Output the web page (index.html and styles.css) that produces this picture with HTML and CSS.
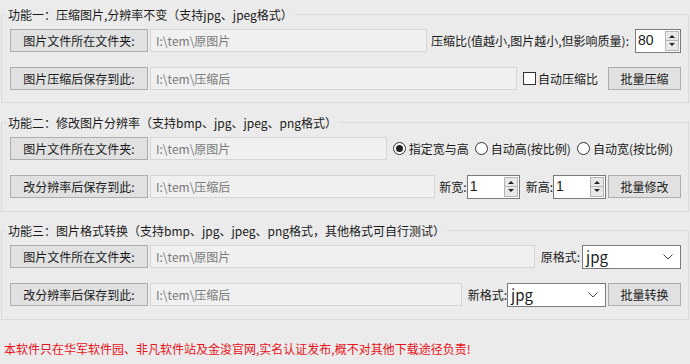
FILE: index.html
```html
<!DOCTYPE html>
<html lang="zh-CN">
<head>
    <meta charset="UTF-8">
    <title>图片批量处理</title>
    <link rel="stylesheet" href="styles.css">
</head>
<body>
    <fieldset class="group first">
        <legend>功能一：压缩图片,分辨率不变（支持jpg、jpeg格式）</legend>
        <div class="row">
            <button class="btn pick">图片文件所在文件夹:</button>
            <div class="path">I:\tem\原图片</div>
            <span class="label gap4">压缩比(值越小,图片越小,但影响质量):</span>
            <div class="spin small gap6"><span class="val">80</span><span class="arrows"><i class="up"></i><i class="down"></i></span></div>
        </div>
        <div class="row">
            <button class="btn pick">图片压缩后保存到此:</button>
            <div class="path">I:\tem\压缩后</div>
            <span class="check gap6"></span>
            <span class="label gap2">自动压缩比</span>
            <button class="btn action gap10">批量压缩</button>
        </div>
    </fieldset>

    <fieldset class="group second">
        <legend>功能二：修改图片分辨率（支持bmp、jpg、jpeg、png格式）</legend>
        <div class="row">
            <button class="btn pick">图片文件所在文件夹:</button>
            <div class="path">I:\tem\原图片</div>
            <span class="radio checked gap6"></span>
            <span class="label gap3">指定宽与高</span>
            <span class="radio gap6"></span>
            <span class="label gap3">自动高(按比例)</span>
            <span class="radio gap6"></span>
            <span class="label gap3 end">自动宽(按比例)</span>
        </div>
        <div class="row">
            <button class="btn pick">改分辨率后保存到此:</button>
            <div class="path">I:\tem\压缩后</div>
            <span class="label gap4">新宽:</span>
            <div class="spin"><span class="val">1</span><span class="arrows"><i class="up"></i><i class="down"></i></span></div>
            <span class="label gap6">新高:</span>
            <div class="spin"><span class="val">1</span><span class="arrows"><i class="up"></i><i class="down"></i></span></div>
            <button class="btn action gap2">批量修改</button>
        </div>
    </fieldset>

    <fieldset class="group third">
        <legend>功能三：图片格式转换（支持bmp、jpg、jpeg、png格式，其他格式可自行测试）</legend>
        <div class="row">
            <button class="btn pick">图片文件所在文件夹:</button>
            <div class="path">I:\tem\原图片</div>
            <span class="label gap6">原格式:</span>
            <div class="select gap2">jpg<svg width="10" height="6" viewBox="0 0 10 6"><polyline points="0.5,0.5 5,5 9.5,0.5" fill="none" stroke="#444" stroke-width="1"/></svg></div>
        </div>
        <div class="row">
            <button class="btn pick">改分辨率后保存到此:</button>
            <div class="path">I:\tem\压缩后</div>
            <span class="label gap6">新格式:</span>
            <div class="select">jpg<svg width="10" height="6" viewBox="0 0 10 6"><polyline points="0.5,0.5 5,5 9.5,0.5" fill="none" stroke="#444" stroke-width="1"/></svg></div>
            <button class="btn action gap2">批量转换</button>
        </div>
    </fieldset>

    <p class="notice">本软件只在华军软件园、非凡软件站及金浚官网,实名认证发布,概不对其他下载途径负责!</p>
</body>
</html>
```

FILE: styles.css
```css
body {
    margin: 0;
    width: 690px;
    height: 364px;
    overflow: hidden;
    background-color: #ebebeb;
    font-family: "Noto Sans CJK SC", sans-serif;
    font-size: 12px;
    color: #1a1a1a;
}
.group {
    margin: 0 1px;
    border: 1px solid #dadada;
    padding: 6px 7px 12px 8px;
}
.first {
    margin-top: 6px;
}
.second {
    margin-top: 11px;
    padding-bottom: 13px;
}
.third {
    margin-top: 10px;
    padding-bottom: 13px;
}
legend {
    margin-left: -4px;
    padding: 0 2px;
    line-height: 17px;
}
.row {
    display: flex;
    align-items: center;
    height: 23px;
}
.row + .row {
    margin-top: 15px;
}
.btn {
    box-sizing: border-box;
    height: 23px;
    padding: 0;
    background-color: #e1e1e1;
    border: 1px solid #adadad;
    font-family: inherit;
    font-size: 12px;
    color: #1a1a1a;
}
.pick {
    width: 138px;
}
.action {
    width: 73px;
}
.path {
    flex: 1;
    box-sizing: border-box;
    height: 23px;
    margin-left: 2px;
    padding-left: 5px;
    line-height: 21px;
    background-color: #f0f0f0;
    border: 1px solid #d6d6d6;
    color: #7a7a7a;
    white-space: nowrap;
}
.label {
    white-space: nowrap;
}
.gap2 { margin-left: 2px; }
.gap3 { margin-left: 3px; }
.gap4 { margin-left: 4px; }
.gap6 { margin-left: 6px; }
.gap10 { margin-left: 10px; }
.end { margin-right: 8px; }
.spin {
    box-sizing: border-box;
    display: flex;
    width: 53px;
    height: 24px;
    background-color: #fff;
    border: 1px solid #7a7a7a;
}
.spin.small {
    width: 46px;
}
.spin .val {
    flex: 1;
    padding-left: 2px;
    font-size: 14px;
    line-height: 21px;
    font-family: "Liberation Sans", sans-serif;
}
.arrows {
    display: flex;
    flex-direction: column;
    width: 14px;
    margin: 1px 1px 1px 0;
}
.arrows i {
    flex: 1;
    position: relative;
    background-color: #e8e8e8;
    border: 1px solid #b4b4b4;
}
.arrows i + i {
    border-top: none;
}
.arrows i::after {
    content: "";
    position: absolute;
    left: 3px;
    top: 3px;
    border-left: 3px solid transparent;
    border-right: 3px solid transparent;
}
.arrows .up::after {
    border-bottom: 3px solid #222;
}
.arrows .down::after {
    top: 2px;
    border-top: 3px solid #222;
}
.check {
    box-sizing: border-box;
    width: 13px;
    height: 13px;
    background-color: #fff;
    border: 1px solid #333;
}
.radio {
    box-sizing: border-box;
    position: relative;
    width: 13px;
    height: 13px;
    border-radius: 50%;
    background-color: #fff;
    border: 1px solid #333;
}
.radio.checked::after {
    content: "";
    position: absolute;
    left: 2px;
    top: 2px;
    width: 7px;
    height: 7px;
    border-radius: 50%;
    background-color: #222;
}
.select {
    box-sizing: border-box;
    display: flex;
    align-items: center;
    justify-content: space-between;
    width: 99px;
    height: 24px;
    padding: 0 7px 0 3px;
    background-color: #fff;
    border: 1px solid #7a7a7a;
    font-size: 15px;
}
.notice {
    margin: 20px 0 0 4px;
    line-height: 17px;
    color: #e8121a;
    white-space: nowrap;
}
```
